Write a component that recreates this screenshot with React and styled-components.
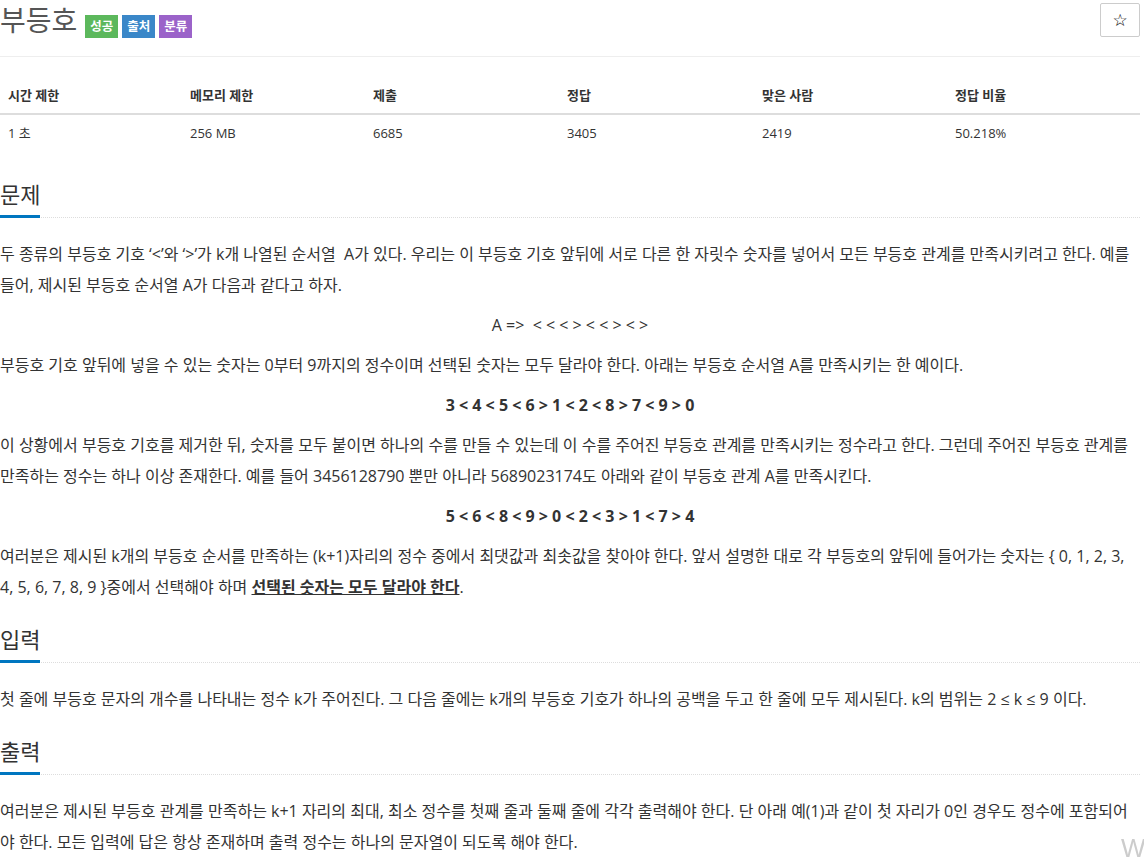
import React from 'react'
import styled, { createGlobalStyle } from 'styled-components'

const GlobalStyle = createGlobalStyle`
  body {
    margin: 0;
    background: #fff;
    color: #333;
    font-family: 'Open Sans', 'Noto Sans CJK KR', sans-serif;
  }
`

const Page = styled.div`
  width: 1140px;
`

const Header = styled.div`
  display: flex;
  justify-content: space-between;
  align-items: flex-start;
  padding-bottom: 16px;
  border-bottom: 1px solid #eee;
  margin-bottom: 20px;
`

const TitleRow = styled.div`
  display: flex;
  align-items: center;
  height: 40px;
`

const Title = styled.h1`
  margin: 0 8px 0 0;
  font-size: 28px;
  font-weight: 400;
  line-height: 40px;
  color: #555;
`

const Label = styled.span`
  display: inline-block;
  margin-top: 12px;
  margin-right: ${(p) => (p.last ? 0 : 4)}px;
  padding: 0 5px;
  height: 23px;
  line-height: 23px;
  font-size: 12.5px;
  font-weight: 700;
  color: #fff;
  background: ${(p) => p.color};
`

const StarButton = styled.button`
  margin-top: 3px;
  width: 40px;
  height: 34px;
  border: 1px solid #ccc;
  border-radius: 2px;
  background: #fff;
  font-size: 17px;
  line-height: 1;
  color: #000;
  font-family: 'DejaVu Sans', sans-serif;
  padding: 0;
`

const Table = styled.table`
  width: 100%;
  table-layout: fixed;
  border-collapse: collapse;
  margin-bottom: 28px;
  font-size: 13px;

  th,
  td {
    padding: 8px;
    line-height: 20px;
    text-align: left;
  }
  th {
    font-weight: 700;
    color: #333;
    border-bottom: 2px solid #ddd;
  }
  td {
    color: #333;
  }
`

const Col = styled.col`
  width: ${(p) => p.w}px;
`

const Section = styled.section`
  margin-bottom: 21px;
`

const Headline = styled.div`
  border-bottom: 1px dotted #ddd;
  margin-bottom: 21px;
`

const HeadlineText = styled.h2`
  display: inline-block;
  margin: 0 0 -1px;
  padding-bottom: 6px;
  min-width: 40px;
  font-size: 22px;
  font-weight: 400;
  line-height: 30px;
  color: #333;
  border-bottom: 3px solid #0076c0;
`

const Text = styled.div`
  font-size: 16px;
  line-height: 31px;
`

const P = styled.p`
  margin: 0 0 ${(p) => (p.last ? 0 : 9)}px;
  text-align: ${(p) => (p.center ? 'center' : 'left')};
  font-weight: ${(p) => (p.bold ? 700 : 400)};
`

const Strong = styled.b`
  text-decoration: underline;
`

const Corner = styled.div`
  position: fixed;
  left: 1121px;
  bottom: -3px;
  font-size: 26px;
  color: #ccc;
  font-family: 'Liberation Sans', sans-serif;
`

const stats = [
  ['시간 제한', '1 초', 182],
  ['메모리 제한', '256 MB', 183],
  ['제출', '6685', 194],
  ['정답', '3405', 195],
  ['맞은 사람', '2419', 193],
  ['정답 비율', '50.218%', 193],
]

const Headed = ({ title, children }) => (
  <Section>
    <Headline>
      <HeadlineText>{title}</HeadlineText>
    </Headline>
    <Text>{children}</Text>
  </Section>
)

export default function App() {
  return (
    <Page>
      <GlobalStyle />
      <Header>
        <TitleRow>
          <Title>부등호</Title>
          <Label color="#5cb85c">성공</Label>
          <Label color="#3a87c8">출처</Label>
          <Label color="#9b63c9" last>
            분류
          </Label>
        </TitleRow>
        <StarButton>☆</StarButton>
      </Header>

      <Table>
        <colgroup>
          {stats.map(([k, , w]) => (
            <Col key={k} w={w} />
          ))}
        </colgroup>
        <thead>
          <tr>
            {stats.map(([k]) => (
              <th key={k}>{k}</th>
            ))}
          </tr>
        </thead>
        <tbody>
          <tr>
            {stats.map(([k, v]) => (
              <td key={k}>{v}</td>
            ))}
          </tr>
        </tbody>
      </Table>

      <Headed title="문제">
        <P>
          두 종류의 부등호 기호 ‘&lt;’와 ‘&gt;’가 k개 나열된 순서열 &nbsp;A가 있다. 우리는 이 부등호 기호
          앞뒤에 서로 다른 한 자릿수 숫자를 넣어서 모든 부등호 관계를 만족시키려고 한다. 예를 들어, 제시된
          부등호 순서열 A가 다음과 같다고 하자.
        </P>
        <P center>A =&gt; &nbsp;&lt; &lt; &lt; &gt; &lt; &lt; &gt; &lt; &gt;</P>
        <P>
          부등호 기호 앞뒤에 넣을 수 있는 숫자는 0부터 9까지의 정수이며 선택된 숫자는 모두 달라야 한다.
          아래는 부등호 순서열 A를 만족시키는 한 예이다.
        </P>
        <P center bold>
          3 &lt; 4 &lt; 5 &lt; 6 &gt; 1 &lt; 2 &lt; 8 &gt; 7 &lt; 9 &gt; 0
        </P>
        <P>
          이 상황에서 부등호 기호를 제거한 뒤, 숫자를 모두 붙이면 하나의 수를 만들 수 있는데 이 수를 주어진
          부등호 관계를 만족시키는 정수라고 한다. 그런데 주어진 부등호 관계를 만족하는 정수는 하나 이상
          존재한다. 예를 들어 3456128790 뿐만 아니라 5689023174도 아래와 같이 부등호 관계 A를 만족시킨다.
        </P>
        <P center bold>
          5 &lt; 6 &lt; 8 &lt; 9 &gt; 0 &lt; 2 &lt; 3 &gt; 1 &lt; 7 &gt; 4
        </P>
        <P last>
          여러분은 제시된 k개의 부등호 순서를 만족하는 (k+1)자리의 정수 중에서 최댓값과 최솟값을 찾아야
          한다. 앞서 설명한 대로 각 부등호의 앞뒤에 들어가는 숫자는 {'{'} 0, 1, 2, 3, 4, 5, 6, 7, 8, 9
          {' }'}중에서 선택해야 하며 <Strong>선택된 숫자는 모두 달라야 한다</Strong>.
        </P>
      </Headed>

      <Headed title="입력">
        <P last>
          첫 줄에 부등호 문자의 개수를 나타내는 정수 k가 주어진다. 그 다음 줄에는 k개의 부등호 기호가 하나의
          공백을 두고 한 줄에 모두 제시된다. k의 범위는 2 ≤ k ≤ 9 이다.
        </P>
      </Headed>

      <Headed title="출력">
        <P last>
          여러분은 제시된 부등호 관계를 만족하는 k+1 자리의 최대, 최소 정수를 첫째 줄과 둘째 줄에 각각
          출력해야 한다. 단 아래 예(1)과 같이 첫 자리가 0인 경우도 정수에 포함되어야 한다. 모든 입력에 답은
          항상 존재하며 출력 정수는 하나의 문자열이 되도록 해야 한다.
        </P>
      </Headed>

      <Corner>W</Corner>
    </Page>
  )
}
